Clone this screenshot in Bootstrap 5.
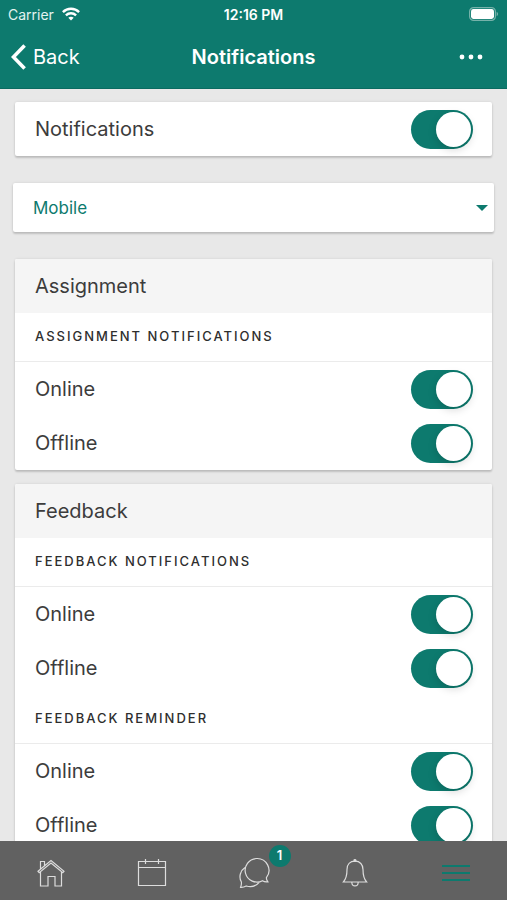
<!DOCTYPE html>
<html lang="en">
<head>
<meta charset="utf-8">
<meta name="viewport" content="width=device-width, initial-scale=1">
<title>Notifications</title>
<link href="https://cdn.jsdelivr.net/npm/bootstrap@5.3.0/dist/css/bootstrap.min.css" rel="stylesheet">
<style>
:root { --teal: #0d7a6e; --ink: #3c3c3c; }
body { font-family: Inter, "Liberation Sans", sans-serif; color: var(--ink); background: #e8e8e8; }
svg { display: block; }
.app-header { background: var(--teal); border-bottom: 1px solid #0a6b61; }
.status-bar { height: 28px; font-size: 14px; padding: 0 8px; color: #e3f3f0; }
.clock { font-weight: 600; color: #fff; }
.title-bar { height: 60px; padding: 0 11px 2px; }
.title-bar h1 { font-size: 20px; font-weight: 600; }
.back-btn { font-size: 20px; gap: 7px; }
.more-btn { margin-right: 13px; }
.app-main { padding: 13px 15px; scrollbar-width: none; }
.app-main::-webkit-scrollbar { display: none; }
.panel { --bs-card-border-width: 0; --bs-card-border-radius: 2px; --bs-card-color: var(--ink); box-shadow: 0 2px 2px rgba(0,0,0,.16), 0 0 3px rgba(0,0,0,.1); overflow: hidden; }
.panel + .panel { margin-top: 14px; }
.setting { min-height: 54px; padding: 0 19px 0 20px; font-size: 20px; }
.panel-title { min-height: 54px; padding: 0 20px; font-size: 20px; background: #f5f5f5; }
.panel-sub { min-height: 49px; padding: 0 20px; font-size: 13px; font-weight: 500; color: #2e2e2e; letter-spacing: 2px; border-bottom: 1px solid #ebebeb; }
.switch-input { appearance: none; display: flex; width: 62px; height: 39px; padding: 2px; border-radius: 20px; background: #ccc; cursor: pointer; flex: none; }
.switch-input::before { content: ""; width: 35px; height: 35px; border-radius: 50%; background: #fff; box-shadow: 0 3px 8px rgba(0,0,0,.15); }
.switch-input:checked { background: var(--teal); justify-content: flex-end; }
.device-picker { margin: 27px -2px; }
.device-select { height: 49px; padding: 2px 40px 0 20px; border: 0; border-radius: 2px; font-size: 17px; color: var(--teal); background: #fff url("data:image/svg+xml,%3Csvg xmlns='http://www.w3.org/2000/svg' viewBox='0 0 12 6'%3E%3Cpath d='M0 0H12L6 6Z' fill='%230d7a6e'/%3E%3C/svg%3E") no-repeat right 6px center / 12px 6px; box-shadow: 0 2px 2px rgba(0,0,0,.16), 0 0 3px rgba(0,0,0,.1); }
.tab-bar { height: 59px; background: #616161; padding-top: 4px; }
.tab-bar a { flex: 1 1 0; color: #ddd; }
.tab-bar a.active { color: var(--teal); }
.count { position: absolute; top: -12px; left: 31px; width: 22px; height: 22px; font-size: 13px; font-weight: 600; background: var(--teal); color: #fff; }
</style>
<script src="https://cdn.jsdelivr.net/npm/bootstrap@5.3.0/dist/js/bootstrap.bundle.min.js" defer></script>
</head>
<body>
<div class="d-flex flex-column vh-100">
  <header class="app-header text-white flex-shrink-0">
    <div class="status-bar row g-0 align-items-center">
      <div class="col d-flex align-items-center gap-2">
        <span>Carrier</span>
        <svg width="18" height="14" viewBox="0 0 18 14" fill="none" stroke="#fff" stroke-width="2.4" aria-hidden="true"><path d="M.9 5.1C5.4.6 12.6.6 17.1 5.1M3.9 8.3c2.9-2.8 7.3-2.8 10.2 0"/><path d="M6.3 10.7c1.6-1.4 3.8-1.4 5.4 0L9 13.6Z" fill="#fff" stroke="none"/></svg>
      </div>
      <div class="col-auto clock">12:16 PM</div>
      <div class="col d-flex justify-content-end">
        <svg width="30" height="14" viewBox="0 0 30 14" aria-hidden="true"><rect x=".6" y=".6" width="25.8" height="12.8" rx="4" fill="none" stroke="#76b2aa" stroke-width="1.2"/><rect x="2" y="2" width="23" height="10" rx="2.4" fill="#fff"/><path d="M27.6 4.8c2 .8 2 3.6 0 4.4Z" fill="#76b2aa"/></svg>
      </div>
    </div>
    <div class="title-bar row g-0 align-items-center">
      <div class="col">
        <button type="button" class="btn p-0 border-0 text-white d-flex align-items-center back-btn">
          <svg width="15" height="26" viewBox="0 0 15 26" fill="none" stroke="#fff" stroke-width="3.6" aria-hidden="true"><path d="M13.6 1.4 2.4 13l11.2 11.6"/></svg>Back
        </button>
      </div>
      <h1 class="col-auto m-0">Notifications</h1>
      <div class="col d-flex justify-content-end">
        <button type="button" class="btn p-0 border-0 more-btn" aria-label="More options">
          <svg width="24" height="6" viewBox="0 0 24 6" fill="#fff"><circle cx="3" cy="3" r="2.4"/><circle cx="12" cy="3" r="2.4"/><circle cx="21" cy="3" r="2.4"/></svg>
        </button>
      </div>
    </div>
  </header>

  <main class="app-main flex-grow-1 overflow-auto">
    <div class="card panel">
      <div class="setting d-flex align-items-center justify-content-between"><label for="all">Notifications</label><input class="switch-input" type="checkbox" role="switch" id="all" checked></div>
    </div>
    <div class="device-picker">
      <select class="form-select device-select" aria-label="Device"><option>Mobile</option></select>
    </div>
    <section class="card panel">
      <h2 class="panel-title d-flex align-items-center m-0 fw-normal">Assignment</h2>
      <h3 class="panel-sub d-flex align-items-center m-0 text-uppercase">Assignment notifications</h3>
      <div class="setting d-flex align-items-center justify-content-between"><label for="a-on">Online</label><input class="switch-input" type="checkbox" role="switch" id="a-on" checked></div>
      <div class="setting d-flex align-items-center justify-content-between"><label for="a-off">Offline</label><input class="switch-input" type="checkbox" role="switch" id="a-off" checked></div>
    </section>
    <section class="card panel">
      <h2 class="panel-title d-flex align-items-center m-0 fw-normal">Feedback</h2>
      <h3 class="panel-sub d-flex align-items-center m-0 text-uppercase">Feedback notifications</h3>
      <div class="setting d-flex align-items-center justify-content-between"><label for="f-on">Online</label><input class="switch-input" type="checkbox" role="switch" id="f-on" checked></div>
      <div class="setting d-flex align-items-center justify-content-between"><label for="f-off">Offline</label><input class="switch-input" type="checkbox" role="switch" id="f-off" checked></div>
      <h3 class="panel-sub d-flex align-items-center m-0 text-uppercase">Feedback reminder</h3>
      <div class="setting d-flex align-items-center justify-content-between"><label for="r-on">Online</label><input class="switch-input" type="checkbox" role="switch" id="r-on" checked></div>
      <div class="setting d-flex align-items-center justify-content-between"><label for="r-off">Offline</label><input class="switch-input" type="checkbox" role="switch" id="r-off" checked></div>
    </section>
  </main>

  <nav class="tab-bar d-flex flex-shrink-0" aria-label="Main">
    <a href="#home" class="d-flex align-items-center justify-content-center" aria-label="Home">
      <svg width="30" height="30" viewBox="0 0 30 30" fill="none" stroke="currentColor" stroke-width="1.2"><path d="M4.5 14v14H12v-9.500h7V28h6.500V14M2 13.300 15 2.500l13 10.800-1.200 1.400L15 5 3.200 14.700ZM4.500 11.200V3.500h4v4.300"/></svg>
    </a>
    <a href="#calendar" class="d-flex align-items-center justify-content-center" aria-label="Calendar">
      <svg width="30" height="30" viewBox="0 0 30 30" fill="none" stroke="currentColor" stroke-width="1.2"><path d="M1.500 3.500h27v24h-27ZM1.500 9.500h27M8.500 1v5M21.500 1v5"/></svg>
    </a>
    <a href="#messages" class="d-flex align-items-center justify-content-center text-decoration-none" aria-label="Messages, 1 new">
      <span class="position-relative">
        <svg width="32" height="32" viewBox="0 0 32 32" fill="none" stroke="currentColor" stroke-width="1.2"><path d="M18.500 1.500a11.800 11.800 0 1 0 6 22.200c1.500 1 3.600 1.400 5.400 1.100-1-1.200-1.600-2.700-1.500-4.200A11.800 11.800 0 0 0 18.500 1.500ZM7 10.500c-4.600 3-6.600 9.500-3.600 14.500.2 2-.1 3.600-.8 5.300 2 .1 3.900-.3 5.600-1.300 5 1.600 9.800 0 13-3.700"/></svg>
        <span class="count rounded-circle d-flex align-items-center justify-content-center">1</span>
      </span>
    </a>
    <a href="#alerts" class="d-flex align-items-center justify-content-center" aria-label="Notifications">
      <svg width="30" height="30" viewBox="0 0 30 30" fill="none" stroke="currentColor" stroke-width="1.2"><path d="M15 3.200c-5 0-8 3.300-8 8.300 0 6.500-1 9.500-3.600 12.500h23.200C24 21 23 18 23 11.500c0-5-3-8.300-8-8.300ZM11.800 24.200c.2 5 6.200 5 6.400 0"/><circle cx="15" cy="2.500" r="1" fill="currentColor"/></svg>
    </a>
    <a href="#menu" class="active d-flex align-items-center justify-content-center" aria-label="Menu" aria-current="page">
      <svg width="28" height="18" viewBox="0 0 28 18" fill="none" stroke="currentColor" stroke-width="2"><path d="M0 2h28M0 9h28M0 16h28"/></svg>
    </a>
  </nav>
</div>
</body>
</html>
